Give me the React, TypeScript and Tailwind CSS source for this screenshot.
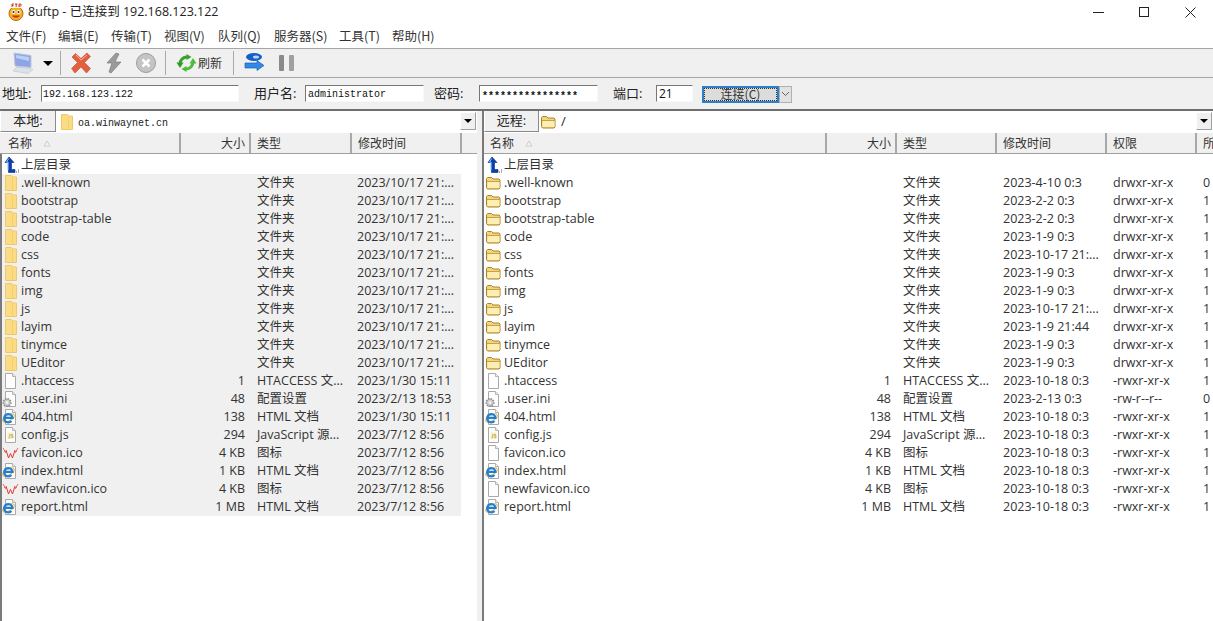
import React from "react";

const cjk = '"Noto Sans CJK SC", sans-serif';
const ui = '"Open Sans", "Noto Sans CJK SC", sans-serif';

type Kind = "flat" | "open" | "file" | "gear" | "ie" | "js" | "wei";
type Row = { n: string; k: Kind; s?: string; t: string; d: string; p?: string; o?: string };

function FlatFolder() {
  return (
    <svg width="16" height="18" viewBox="0 0 16 18">
      <path d="M2.500 1.500h6l1 1.500h4v13.500h-11z" fill="#fbdc85" stroke="#efc968" />
      <path d="M9.500 3v13" stroke="#f3cf72" />
    </svg>
  );
}
function OpenFolder() {
  return (
    <svg width="17" height="16" viewBox="0 0 17 16">
      <path d="M1.500 12.500V3.500l1-1h4l1.500 1.500h6l1 1v8l-1 1h-11.500z" fill="#f3d47e" stroke="#a88428" />
      <path d="M2.500 6.500h12v6.500h-12z" fill="#fdeeb5" />
      <path d="M2 6.500h13" stroke="#c9a23e" />
    </svg>
  );
}
function FileIcon({ children }: { children?: React.ReactNode }) {
  return (
    <svg width="17" height="18" viewBox="0 0 17 18">
      <path d="M3.500 1.500h7l3 3v12h-10z" fill="#fdfdfd" stroke="#a9a9a9" />
      <path d="M10.500 1.500v3h3" fill="#eee" stroke="#b5b5b5" />
      {children}
    </svg>
  );
}
function Icon({ k }: { k: Kind }) {
  if (k === "flat") return <FlatFolder />;
  if (k === "open") return <OpenFolder />;
  if (k === "file") return <FileIcon />;
  if (k === "gear")
    return (
      <FileIcon>
        <circle cx="5" cy="12.500" r="3.700" fill="#d0d0d0" stroke="#8c8c8c" strokeDasharray="1.500 1" strokeWidth="1.800" />
        <circle cx="5" cy="12.500" r="1.300" fill="#f4f4f4" />
      </FileIcon>
    );
  if (k === "ie")
    return (
      <FileIcon>
        <ellipse cx="6.500" cy="10" rx="6.300" ry="2.800" fill="none" stroke="#e4b53a" strokeWidth="1" transform="rotate(-30 6.500 10)" />
        <path d="M2.500 9.800h8a4.200 4.200 0 10-1 3.200" fill="none" stroke="#1f7fd6" strokeWidth="2.200" />
      </FileIcon>
    );
  if (k === "js")
    return (
      <FileIcon>
        <rect x="5.500" y="6.500" width="6" height="6.500" fill="#f6efc4" />
        <path d="M7.800 8v3.500l-1.300.5M11 8.500H9.500V10H11v1.500H9.500" fill="none" stroke="#b7a34a" strokeWidth=".8" />
      </FileIcon>
    );
  return (
    <svg width="17" height="18" viewBox="0 0 17 18">
      <path d="M4 6l2.500 8 2-4.500 2 4.500 2.500-8" fill="none" stroke="#e23a2e" strokeWidth="1" />
      <path d="M1 4l3 5M16 4l-3 5M2 7l2 1M15 7l-2 1" fill="none" stroke="#e8574c" strokeWidth=".9" />
    </svg>
  );
}

const time = "2023/10/17 21:...";
const dirsL = [".well-known", "bootstrap", "bootstrap-table", "code", "css", "fonts", "img", "js", "layim", "tinymce", "UEditor"];
const leftRows: Row[] = [
  ...dirsL.map((n) => ({ n, k: "flat" as Kind, t: "文件夹", d: time })),
  { n: ".htaccess", k: "file", s: "1", t: "HTACCESS 文...", d: "2023/1/30 15:11" },
  { n: ".user.ini", k: "gear", s: "48", t: "配置设置", d: "2023/2/13 18:53" },
  { n: "404.html", k: "ie", s: "138", t: "HTML 文档", d: "2023/1/30 15:11" },
  { n: "config.js", k: "js", s: "294", t: "JavaScript 源...", d: "2023/7/12 8:56" },
  { n: "favicon.ico", k: "wei", s: "4 KB", t: "图标", d: "2023/7/12 8:56" },
  { n: "index.html", k: "ie", s: "1 KB", t: "HTML 文档", d: "2023/7/12 8:56" },
  { n: "newfavicon.ico", k: "wei", s: "4 KB", t: "图标", d: "2023/7/12 8:56" },
  { n: "report.html", k: "ie", s: "1 MB", t: "HTML 文档", d: "2023/7/12 8:56" },
];
const perm = "drwxr-xr-x";
const rightRows: Row[] = [
  { n: ".well-known", k: "open", t: "文件夹", d: "2023-4-10 0:3", p: perm, o: "0" },
  { n: "bootstrap", k: "open", t: "文件夹", d: "2023-2-2 0:3", p: perm, o: "1" },
  { n: "bootstrap-table", k: "open", t: "文件夹", d: "2023-2-2 0:3", p: perm, o: "1" },
  { n: "code", k: "open", t: "文件夹", d: "2023-1-9 0:3", p: perm, o: "1" },
  { n: "css", k: "open", t: "文件夹", d: "2023-10-17 21:...", p: perm, o: "1" },
  { n: "fonts", k: "open", t: "文件夹", d: "2023-1-9 0:3", p: perm, o: "1" },
  { n: "img", k: "open", t: "文件夹", d: "2023-1-9 0:3", p: perm, o: "1" },
  { n: "js", k: "open", t: "文件夹", d: "2023-10-17 21:...", p: perm, o: "1" },
  { n: "layim", k: "open", t: "文件夹", d: "2023-1-9 21:44", p: perm, o: "1" },
  { n: "tinymce", k: "open", t: "文件夹", d: "2023-1-9 0:3", p: perm, o: "1" },
  { n: "UEditor", k: "open", t: "文件夹", d: "2023-1-9 0:3", p: perm, o: "1" },
  { n: ".htaccess", k: "file", s: "1", t: "HTACCESS 文...", d: "2023-10-18 0:3", p: "-rwxr-xr-x", o: "1" },
  { n: ".user.ini", k: "gear", s: "48", t: "配置设置", d: "2023-2-13 0:3", p: "-rw-r--r--", o: "0" },
  { n: "404.html", k: "ie", s: "138", t: "HTML 文档", d: "2023-10-18 0:3", p: "-rwxr-xr-x", o: "1" },
  { n: "config.js", k: "js", s: "294", t: "JavaScript 源...", d: "2023-10-18 0:3", p: "-rwxr-xr-x", o: "1" },
  { n: "favicon.ico", k: "file", s: "4 KB", t: "图标", d: "2023-10-18 0:3", p: "-rwxr-xr-x", o: "1" },
  { n: "index.html", k: "ie", s: "1 KB", t: "HTML 文档", d: "2023-10-18 0:3", p: "-rwxr-xr-x", o: "1" },
  { n: "newfavicon.ico", k: "file", s: "4 KB", t: "图标", d: "2023-10-18 0:3", p: "-rwxr-xr-x", o: "1" },
  { n: "report.html", k: "ie", s: "1 MB", t: "HTML 文档", d: "2023-10-18 0:3", p: "-rwxr-xr-x", o: "1" },
];

const menus = [
  { t: "文件(F)", w: "w-[52px]" },
  { t: "编辑(E)", w: "w-[53px]" },
  { t: "传输(T)", w: "w-[53px]" },
  { t: "视图(V)", w: "w-[54px]" },
  { t: "队列(Q)", w: "w-[56px]" },
  { t: "服务器(S)", w: "w-[65px]" },
  { t: "工具(T)", w: "w-[53px]" },
  { t: "帮助(H)", w: "w-[50px]" },
];

function Up() {
  return (
    <svg width="17" height="18" viewBox="0 0 17 18">
      <path d="M7 1l5 5.500H9.500v7H13v3H6.500V6.500H3z" fill="#0b3fb0" stroke="#062a78" strokeWidth=".6" />
      <path d="M6.800 2.500L4.500 6H6v8" fill="none" stroke="#7cc4f8" />
      <path d="M14 16h1M16 16h1M16 14h1" stroke="#555" />
    </svg>
  );
}

function Head({ w, children, right, last, first }: { w: string; children?: React.ReactNode; right?: boolean; last?: boolean; first?: boolean }) {
  return (
    <div
      className={`${w} shrink-0 h-full flex items-center overflow-hidden whitespace-nowrap ${first ? "pl-[8px]" : "pl-[6px]"} ${right ? "justify-end pr-[4px]" : ""} ${last ? "" : "border-r-2 border-[#a8a8a8]"}`}
    >
      {children}
    </div>
  );
}

function Sort() {
  return (
    <svg width="8" height="7" viewBox="0 0 8 7" className="ml-[11px]">
      <path d="M4 1l3 5H1z" fill="#f4f4f4" stroke="#c4c4c4" strokeWidth=".8" />
    </svg>
  );
}

function Combo({ label, tabW, folder, path, mono }: { label: string; tabW: string; folder: React.ReactNode; path: string; mono?: boolean }) {
  return (
    <div className="h-[22px] flex shrink-0 bg-white">
      <div className={`${tabW} h-[21px] shrink-0 bg-[#f0f0f0] border-r border-b border-[#8a8a8a] border-l border-l-white flex items-center justify-center text-[13px] text-[#222]`}>{label}</div>
      <div className={`flex-1 flex items-center min-w-0 ${mono ? "pl-[3px]" : "pl-[1px]"}`}>
        {folder}
        <span className={mono ? "ml-[3px] text-[10px] mt-[2px] text-[#222]" : "ml-[4px] text-[13px] text-[#222]"} style={{ fontFamily: mono ? '"Liberation Mono", monospace' : ui }}>{path}</span>
      </div>
      <div className="w-[16px] h-[18px] mt-[1px] mr-[1px] bg-[#f0f0f0] border border-[#a0a0a0] border-t-white border-l-white flex items-center justify-center shrink-0">
        <div className="w-0 h-0 border-x-[4px] border-x-transparent border-t-[4px] border-t-black" />
      </div>
    </div>
  );
}

function Pane({ className, children }: { className: string; children: React.ReactNode }) {
  return <div className={`${className} shrink-0 h-full flex flex-col overflow-hidden bg-white`}>{children}</div>;
}

function Name({ k, n, up }: { k?: Kind; n: string; up?: boolean }) {
  return (
    <div className="flex items-center h-full min-w-0">
      <span className="w-[17px] h-[18px] shrink-0 flex items-center justify-center">{up ? <Up /> : <Icon k={k!} />}</span>
      <span className="ml-[2px] whitespace-nowrap">{n}</span>
    </div>
  );
}

function Sep() {
  return <div className="w-px h-[24px] bg-[#a9a9a9] shrink-0" />;
}

function Field({ w, children, mono, small, tight }: { w: string; children: React.ReactNode; mono?: boolean; small?: boolean; tight?: boolean }) {
  return (
    <div
      className={`${w} h-[17px] shrink-0 bg-white border border-[#f8f8f8] border-t-[#767676] border-l-[#767676] flex items-center text-[#111] overflow-hidden whitespace-nowrap ${mono ? "pt-[1px]" : ""} ${tight ? "pl-[1px]" : "pl-[2px]"} ${small ? "text-[12px]" : "text-[10px]"}`}
      style={{ fontFamily: mono ? '"Liberation Mono", monospace' : ui }}
    >
      {children}
    </div>
  );
}

export default function App() {
  return (
    <div className="w-[1213px] h-[621px] overflow-hidden bg-white flex flex-col text-[12.5px] text-[#333]" style={{ fontFamily: ui }}>
      <div className="h-[24px] flex items-center shrink-0">
        <svg width="18" height="18" viewBox="0 0 18 18" className="ml-[7px]">
          <circle cx="9" cy="10.500" r="7" fill="#f7b21e" stroke="#b8690e" />
          <circle cx="6.500" cy="9" r="2" fill="#fff" />
          <circle cx="11.500" cy="9" r="2" fill="#fff" />
          <circle cx="6.500" cy="9" r="1" fill="#222" />
          <circle cx="11.500" cy="9" r="1" fill="#222" />
          <path d="M5 12.500c1.500 3 6.500 3 8 0z" fill="#c0301c" />
          <rect x="4" y="0" width="11" height="5" fill="#fff" opacity=".9" />
          <path d="M5 1h2M5 1v3M5 2.500h1.500M8 1h2.500M9.200 1v3M12 4V1h1.300a1 1 0 010 2H12" fill="none" stroke="#c02218" strokeWidth=".9" />
        </svg>
        <span className="ml-[3px] text-[12.5px] text-[#222]">8uftp - 已连接到 192.168.123.122</span>
        <div className="ml-auto flex items-center h-full">
          <div className="w-[46px] flex justify-center"><div className="w-[11px] h-px bg-[#222]" /></div>
          <div className="w-[46px] flex justify-center"><div className="w-[10px] h-[10px] border border-[#222]" /></div>
          <div className="w-[46px] flex justify-center">
            <svg width="11" height="11" viewBox="0 0 11 11"><path d="M.5.5l10 10M10.500.5l-10 10" stroke="#222" /></svg>
          </div>
        </div>
      </div>
      <div className="h-[24px] flex items-center shrink-0 text-[12.5px] text-[#333] pl-[6px]" style={{ fontFamily: cjk }}>
        {menus.map((m) => (
          <span key={m.t} className={`${m.w} shrink-0 whitespace-nowrap`}>{m.t}</span>
        ))}
      </div>
      <div className="h-[30px] shrink-0 bg-[#f0f0f0] border-t border-b border-[#a5a5a5] flex items-center">
        <svg width="24" height="24" viewBox="0 0 24 24" className="ml-[11px]">
          <path d="M3 2l17 2.500v12L4 15z" fill="#8fa4e6" stroke="#c0c6d6" />
          <path d="M5 4l13 2v4L5 7z" fill="#b9d0f6" />
          <path d="M6 16l-4 4 15 2.500 5-4-6-1.500z" fill="#dde1e8" stroke="#bcc1ca" strokeWidth=".6" />
        </svg>
        <div className="ml-[8px] w-0 h-0 border-x-[5px] border-x-transparent border-t-[5px] border-t-black" />
        <div className="ml-[7px]"><Sep /></div>
        <svg width="22" height="22" viewBox="0 0 22 22" className="ml-[9px]">
          <path d="M2 5l3.500-3.500 5.500 5 6-5.500 3.500 3.500-6 6 6 6-4 4.500-5.500-6-6 6-3.500-4.500 6-6z" fill="#e2603f" stroke="#c24a2a" strokeWidth=".6" />
          <path d="M6 3l5 5 6-5" fill="none" stroke="#f5b09a" />
        </svg>
        <svg width="20" height="22" viewBox="0 0 20 22" className="ml-[12px]">
          <path d="M12 1L3 11h5l-3 9 2 1 10-11h-6l4-8z" fill="#9b9b9b" stroke="#6e6e6e" strokeWidth=".6" />
        </svg>
        <svg width="22" height="22" viewBox="0 0 22 22" className="ml-[11px]">
          <circle cx="11" cy="11" r="9.500" fill="#c4c4c4" stroke="#9c9c9c" />
          <path d="M7.500 7.500l7 7M14.500 7.500l-7 7" stroke="#fff" strokeWidth="2.500" />
        </svg>
        <div className="ml-[8px]"><Sep /></div>
        <svg width="21" height="20" viewBox="0 0 21 20" className="ml-[10px]">
          <path d="M4 11a7 7 0 017-7" fill="none" stroke="#36a32c" strokeWidth="3" />
          <path d="M.5 9.500h7L4 15z" fill="#2f9a26" />
          <path d="M10.500 1l5 3-5 3z" fill="#36a32c" />
          <path d="M17 9a7 7 0 01-7 7" fill="none" stroke="#4dbb3c" strokeWidth="3" />
          <path d="M13.500 10.500h7L17 5z" fill="#4dbb3c" />
          <path d="M10.500 13l-5 3 5 3z" fill="#4dbb3c" />
        </svg>
        <span className="ml-[1px] text-[12px] text-[#333]" style={{ fontFamily: cjk }}>刷新</span>
        <div className="ml-[11px]"><Sep /></div>
        <svg width="21" height="22" viewBox="0 0 21 22" className="ml-[10px]">
          <ellipse cx="10" cy="5" rx="8" ry="4" fill="#1560c8" />
          <ellipse cx="12" cy="5" rx="3" ry="1.500" fill="#bcd4f4" />
          <path d="M1 11h12V8.500l7 5-7 5V16H1z" fill="#2f8be6" stroke="#1050a8" strokeWidth=".6" />
        </svg>
        <div className="ml-[14px] w-[5px] h-[16px] bg-[#8a8a8a] rounded-[1px]" />
        <div className="ml-[5px] w-[5px] h-[16px] bg-[#a0a0a0] rounded-[1px]" />
      </div>
      <div className="h-[31px] shrink-0 bg-[#f0f0f0] flex items-center text-[13px] text-[#222]">
        <span className="ml-[2px] w-[39px] shrink-0 whitespace-nowrap">地址:</span>
        <Field w="w-[198px]" mono tight>192.168.123.122</Field>
        <span className="ml-[15px] w-[51px] shrink-0 whitespace-nowrap">用户名:</span>
        <Field w="w-[119px]" mono>administrator</Field>
        <span className="ml-[10px] w-[45px] shrink-0 whitespace-nowrap">密码:</span>
        <Field w="w-[119px]" mono><span className="mt-[4px] font-bold">****************</span></Field>
        <span className="ml-[15px] w-[43px] shrink-0 whitespace-nowrap">端口:</span>
        <Field w="w-[37px]" small>21</Field>
        <div className="ml-[9px] mt-[1px] w-[77px] h-[17px] border-2 border-[#2f7fc8] bg-[#dcdcdc] flex items-center justify-center text-[12px] text-[#333] shrink-0 outline-1 outline-dotted outline-[#333] -outline-offset-3" style={{ fontFamily: cjk }}>连接(C)</div>
        <div className="mt-[1px] w-[13px] h-[17px] bg-[#e2e2e2] border border-[#b0b0b0] flex items-center justify-center shrink-0">
          <svg width="9" height="6" viewBox="0 0 9 6"><path d="M1 1l3.500 3.500L8 1" fill="none" stroke="#666" /></svg>
        </div>
      </div>
      <div className="flex-1 min-h-0 flex bg-[#f0f0f0] border-t-2 border-[#6e6e6e]">
        <Pane className="w-[477px]">
          <Combo label="本地:" tabW="w-[56px]" folder={<FlatFolder />} path="oa.winwaynet.cn" mono />
          <div className="h-[21px] shrink-0 bg-[#f0f0f0] border-b border-[#a0a0a0] flex text-[12px]" style={{ fontFamily: cjk }}>
            <Head w="w-[181px]" first>名称<Sort /></Head>
            <Head w="w-[70px]" right>大小</Head>
            <Head w="w-[101px]">类型</Head>
            <Head w="w-[110px]">修改时间</Head>
          </div>
          <div className="flex-1 min-h-0 flex flex-col border-l-2 border-[#7a7a7a] pt-[2px]">
            <div className="h-[18px] shrink-0 flex items-center"><Name up n="上层目录" /></div>
            {leftRows.map((r) => (
              <div key={r.n} className="w-[459px] h-[18px] shrink-0 bg-[#f0f0f0] flex items-center">
                <div className="w-[179px] shrink-0 h-full"><Name k={r.k} n={r.n} /></div>
                <div className="w-[64px] shrink-0 text-right">{r.s}</div>
                <div className="w-[112px] shrink-0 pl-[12px] whitespace-nowrap">{r.t}</div>
                <div className="whitespace-nowrap">{r.d}</div>
              </div>
            ))}
          </div>
        </Pane>
        <div className="w-[5px] shrink-0 bg-[#f0f0f0]" />
        <Pane className="flex-1 border-l-2 border-[#7a7a7a]">
          <Combo label="远程:" tabW="w-[55px]" folder={<OpenFolder />} path="/" />
          <div className="h-[21px] shrink-0 bg-[#f0f0f0] border-b border-[#a0a0a0] flex text-[12px]" style={{ fontFamily: cjk }}>
            <Head w="w-[343px]">名称<Sort /></Head>
            <Head w="w-[70px]" right>大小</Head>
            <Head w="w-[100px]">类型</Head>
            <Head w="w-[110px]">修改时间</Head>
            <Head w="w-[90px]">权限</Head>
            <Head w="w-[20px]" last>所</Head>
          </div>
          <div className="h-[18px] mt-[2px] shrink-0 pl-[1px] flex items-center"><Name up n="上层目录" /></div>
          {rightRows.map((r) => (
            <div key={r.n} className="h-[18px] shrink-0 flex items-center">
              <div className="w-[343px] shrink-0 pl-[1px] h-full"><Name k={r.k} n={r.n} /></div>
              <div className="w-[64px] shrink-0 text-right">{r.s}</div>
              <div className="w-[112px] shrink-0 pl-[12px] whitespace-nowrap">{r.t}</div>
              <div className="w-[110px] shrink-0 whitespace-nowrap">{r.d}</div>
              <div className="w-[90px] shrink-0">{r.p}</div>
              <div>{r.o}</div>
            </div>
          ))}
        </Pane>
      </div>
    </div>
  );
}
